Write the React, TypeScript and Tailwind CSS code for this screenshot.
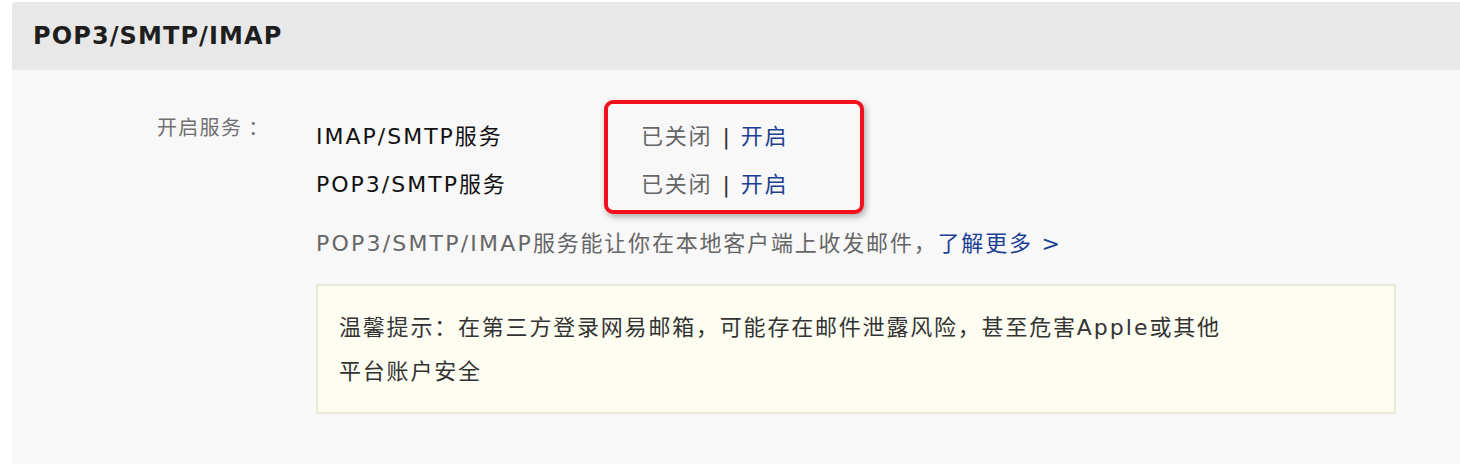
const LINK = "text-[#1c3f94] cursor-pointer";

// Latin runs render wider in the reference (Verdana), so give them a bit more tracking
function Latin({ children, wide = false }: { children: React.ReactNode; wide?: boolean }) {
  return <span className={wide ? "tracking-[2.2px]" : "tracking-[2px]"}>{children}</span>;
}

export default function App() {
  const services = ["IMAP/SMTP", "POP3/SMTP"];

  return (
    <div className="w-[1460px] h-[464px] bg-white pl-[12px] pt-[2px] overflow-hidden font-['DejaVu_Sans','Noto_Sans_CJK_SC',sans-serif]">
      <div className="h-full rounded-tl-[4px] overflow-hidden bg-[#f8f8f8]">
        {/* Header */}
        <div className="h-[68px] bg-[#e8e8e8] flex items-center pl-[21px]">
          <h2 className="text-[24px] font-bold tracking-[1.1px] text-[#1e1e1e]">POP3/SMTP/IMAP</h2>
        </div>

        {/* Body */}
        <div className="flex pt-[30px] tracking-[1.8px]">
          <div className="w-[304px] pl-[145px] pt-[13px] text-[20px] leading-[30px] tracking-[1.3px] text-[#707070]">
            开启服务<span className="ml-[6px]">：</span>
          </div>

          <div className="flex flex-col">
            <div className="flex">
              <div className="w-[288px] pt-[12px] flex flex-col">
                {services.map((s) => (
                  <div key={s} className="h-[48px] flex items-center text-[22px] text-[#111]">
                    <Latin>{s}</Latin>服务
                  </div>
                ))}
              </div>
              <div className="w-[260px] h-[114px] border-4 border-[#f2101c] rounded-[9px] shadow-[2px_3px_6px_rgba(0,0,0,0.3)] pl-[33px] pt-[8px]">
                {services.map((s) => (
                  <div key={s} className="h-[48px] flex items-center text-[22px] text-[#666]">
                    已关闭
                    <span className="ml-[10px] mr-[9px] text-[#333]">|</span>
                    <a className={LINK}>开启</a>
                  </div>
                ))}
              </div>
            </div>

            <p className="mt-[12px] h-[34px] flex items-center text-[22px] text-[#666]">
              <Latin wide>POP3/SMTP/IMAP</Latin>服务能让你在本地客户端上收发邮件，
              <a className={LINK}>了解更多 &gt;</a>
            </p>

            <div className="mt-[24px] w-[1080px] h-[130px] bg-[#fdfdf2] border-2 border-[#e9e9d6] pl-[21px] pt-[20px] text-[22px] leading-[44px] text-[#333]">
              温馨提示：在第三方登录网易邮箱，可能存在邮件泄露风险，甚至危害<Latin>Apple</Latin>或其他
              <br />
              平台账户安全
            </div>
          </div>
        </div>
      </div>
    </div>
  );
}
